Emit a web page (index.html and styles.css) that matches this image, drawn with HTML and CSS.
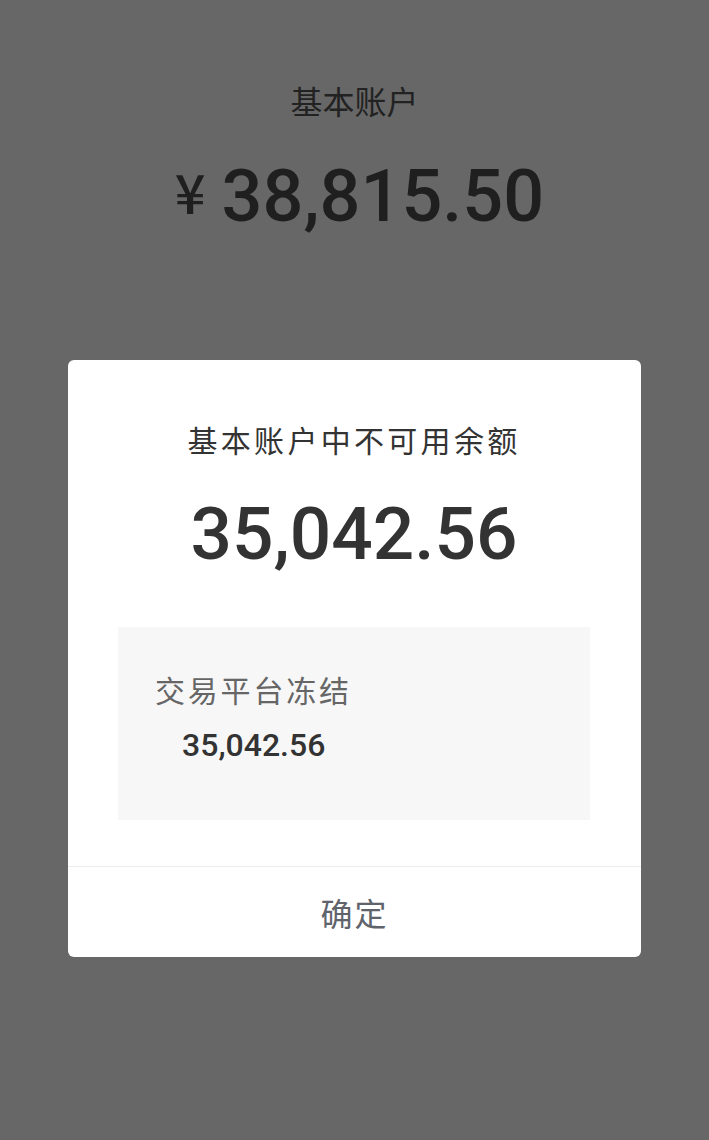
FILE: index.html
```html
<!DOCTYPE html>
<html lang="zh-CN">
<head>
    <meta charset="UTF-8">
    <meta name="viewport" content="width=device-width, initial-scale=1.0">
    <title>基本账户</title>
    <link rel="stylesheet" href="styles.css">
</head>
<body>
    <div class="page">

        <div class="account">
            <div class="account-title">基本账户</div>
            <div class="account-amount">
                <span class="currency">¥</span>
                <span class="amount">38,815.50</span>
            </div>
        </div>

        <div class="dialog">
            <div class="dialog-body">
                <div class="dialog-title">基本账户中不可用余额</div>
                <div class="dialog-amount">35,042.56</div>

                <div class="detail">
                    <div class="detail-label">交易平台冻结</div>
                    <div class="detail-value">35,042.56</div>
                </div>
            </div>
            <div class="dialog-footer">
                <button class="confirm">确定</button>
            </div>
        </div>

    </div>
</body>
</html>
```

FILE: styles.css
```css
body {
    margin: 0;
    background-color: #676767;
    font-family: "Noto Sans CJK SC", "Noto Sans", sans-serif;
    min-height: 100vh;
}

.page {
    padding-top: 80px;
}

.account {
    display: flex;
    flex-direction: column;
    align-items: center;
}

.account-title {
    font-size: 32px;
    line-height: 40px;
    color: #222;
}

.account-amount {
    display: flex;
    align-items: flex-start;
    margin-top: 37px;
    margin-left: 10px;
    height: 80px;
}

.currency {
    font-family: "Noto Sans CJK SC", sans-serif;
    font-size: 54px;
    font-weight: 500;
    line-height: 60px;
    color: #1f1f1f;
    margin-top: 4px;
    margin-right: 16px;
}

.amount,
.dialog-amount,
.detail-value {
    font-family: Roboto, "DejaVu Sans", sans-serif;
    font-weight: 500;
}

.amount {
    font-size: 72px;
    line-height: 80px;
    color: #1f1f1f;
}

.dialog {
    width: 573px;
    margin: 123px auto 0;
    background-color: #fff;
    border-radius: 6px;
    overflow: hidden;
}

.dialog-body {
    padding: 59px 51px 46px 50px;
    display: flex;
    flex-direction: column;
    align-items: center;
}

.dialog-title {
    font-size: 30px;
    line-height: 40px;
    letter-spacing: 3.3px;
    color: #333;
}

.dialog-amount {
    margin-top: 35px;
    font-size: 73px;
    line-height: 80px;
    color: #333;
}

.detail {
    align-self: stretch;
    margin-top: 53px;
    height: 193px;
    box-sizing: border-box;
    padding: 42px 37px 0;
    background-color: #f7f7f7;
}

.detail-label {
    font-size: 30px;
    line-height: 40px;
    letter-spacing: 2.8px;
    color: #666;
}

.detail-value {
    margin-top: 16px;
    padding-left: 27px;
    font-size: 32px;
    line-height: 40px;
    color: #333;
}

.dialog-footer {
    border-top: 1px solid #ececec;
}

.confirm {
    display: block;
    width: 100%;
    height: 90px;
    padding: 0;
    border: none;
    background: none;
    font-family: inherit;
    font-size: 32px;
    letter-spacing: 2px;
    color: #5f646c;
    cursor: pointer;
}
```
